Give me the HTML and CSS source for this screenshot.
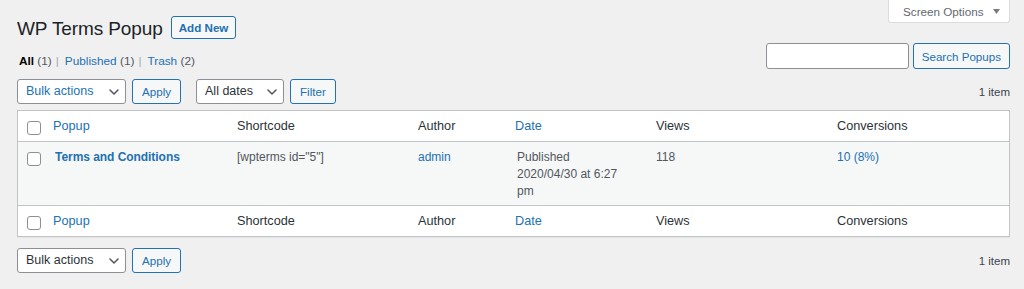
FILE: index.html
```html
<!DOCTYPE html>
<html lang="en">
<head>
<meta charset="utf-8">
<title>WP Terms Popup</title>
<link rel="stylesheet" href="styles.css">
</head>
<body>
<div class="wrap">
  <div class="screen-meta-links">
    <button class="screen-options" type="button">Screen Options
      <svg class="so-arrow" width="7" height="5" viewBox="0 0 7 5"><path d="M0 0h7L3.5 5z" fill="#787c82"/></svg>
    </button>
  </div>

  <div class="heading">
    <h1 class="page-title">WP Terms Popup</h1>
    <a class="add-new" href="#">Add New</a>
  </div>

  <div class="filters-row">
    <ul class="subsubsub">
      <li><a class="current" href="#">All <span class="count">(1)</span></a><span class="sep">|</span></li>
      <li><a href="#">Published <span class="count">(1)</span></a><span class="sep">|</span></li>
      <li><a href="#">Trash <span class="count">(2)</span></a></li>
    </ul>
    <div class="search-box">
      <input class="search-input" type="search" aria-label="Search Popups">
      <button class="btn btn-search" type="button">Search Popups</button>
    </div>
  </div>

  <div class="tablenav tablenav-top">
    <div class="actions">
      <span class="select-wrap">
        <select class="select select-bulk is-hover"><option>Bulk actions</option></select>
        <svg class="chev" width="10" height="6" viewBox="0 0 10 6"><path d="M1 1l4 4 4-4" fill="none" stroke="#50575e" stroke-width="1.5" stroke-linecap="round" stroke-linejoin="round"/></svg>
      </span>
      <button class="btn" type="button">Apply</button>
    </div>
    <div class="actions actions-dates">
      <span class="select-wrap">
        <select class="select select-dates"><option>All dates</option></select>
        <svg class="chev" width="10" height="6" viewBox="0 0 10 6"><path d="M1 1l4 4 4-4" fill="none" stroke="#50575e" stroke-width="1.5" stroke-linecap="round" stroke-linejoin="round"/></svg>
      </span>
      <button class="btn btn-filter" type="button">Filter</button>
    </div>
    <div class="displaying-num">1 item</div>
  </div>

  <table class="list-table">
    <colgroup>
      <col class="c-cb"><col class="c-popup"><col class="c-short"><col class="c-author"><col class="c-date"><col class="c-views"><col class="c-conv">
    </colgroup>
    <thead>
      <tr>
        <th class="cb"><input class="check" type="checkbox" aria-label="Select all"></th>
        <th class="sortable"><a href="#">Popup</a></th>
        <th>Shortcode</th>
        <th>Author</th>
        <th class="sortable"><a href="#">Date</a></th>
        <th>Views</th>
        <th>Conversions</th>
      </tr>
    </thead>
    <tbody>
      <tr class="alt">
        <td class="cb"><input class="check" type="checkbox" aria-label="Select Terms and Conditions"></td>
        <td><a class="row-title" href="#">Terms and Conditions</a></td>
        <td>[wpterms id="5"]</td>
        <td><a href="#">admin</a></td>
        <td class="date">Published<br>2020/04/30 at 6:27 pm</td>
        <td>118</td>
        <td><a href="#">10 (8%)</a></td>
      </tr>
    </tbody>
    <tfoot>
      <tr>
        <th class="cb"><input class="check" type="checkbox" aria-label="Select all"></th>
        <th class="sortable"><a href="#">Popup</a></th>
        <th>Shortcode</th>
        <th>Author</th>
        <th class="sortable"><a href="#">Date</a></th>
        <th>Views</th>
        <th>Conversions</th>
      </tr>
    </tfoot>
  </table>

  <div class="tablenav tablenav-bottom">
    <div class="actions">
      <span class="select-wrap">
        <select class="select select-bulk"><option>Bulk actions</option></select>
        <svg class="chev" width="10" height="6" viewBox="0 0 10 6"><path d="M1 1l4 4 4-4" fill="none" stroke="#50575e" stroke-width="1.5" stroke-linecap="round" stroke-linejoin="round"/></svg>
      </span>
      <button class="btn" type="button">Apply</button>
    </div>
    <div class="displaying-num">1 item</div>
  </div>
</div>
</body>
</html>
```

FILE: styles.css
```css
* { box-sizing: border-box; }

html, body {
  margin: 0;
  background: #f0f0f1;
  font-family: "Liberation Sans", Arial, sans-serif;
  color: #3c434a;
}

a { color: #2271b1; text-decoration: none; }

.wrap {
  padding: 0 14px 0 17px;
}

/* Screen options tab */
.screen-meta-links {
  float: right;
}
.screen-options {
  display: flex;
  align-items: center;
  gap: 9px;
  width: 122px;
  height: 23px;
  padding: 0 0 0 14px;
  background: #fff;
  border: 1px solid #dcdcde;
  border-top: none;
  border-radius: 0 0 3px 3px;
  font-family: inherit;
  font-size: 11.7px;
  color: #646970;
  cursor: pointer;
}
.so-arrow { display: block; }

/* Heading */
.heading {
  display: flex;
  align-items: flex-start;
  padding-top: 17px;
}
.page-title {
  margin: 0;
  font-size: 19px;
  line-height: 23px;
  font-weight: 400;
  letter-spacing: -0.1px;
  color: #1d2327;
}
.add-new {
  margin: -1px 0 0 8px;
  height: 23px;
  padding: 0 7px;
  line-height: 21px;
  border: 1px solid #2271b1;
  border-radius: 3px;
  background: #f6f7f7;
  font-size: 11.6px;
  font-weight: 700;
  color: #2271b1;
}

/* Views + search */
.filters-row {
  display: flex;
  justify-content: space-between;
  align-items: flex-start;
  margin-top: 3px;
}
.subsubsub {
  display: flex;
  list-style: none;
  margin: 10px 0 0 2px;
  padding: 0;
  font-size: 11.8px;
  line-height: 17px;
  color: #646970;
}
.subsubsub .current { color: #000; font-weight: 700; }
.subsubsub .count { color: #50575e; font-weight: 400; }
.subsubsub .sep { color: #a7aaad; margin: 0 6px 0 4px; }

.search-box {
  display: flex;
  gap: 4px;
}
.search-input {
  width: 143px;
  height: 26px;
  margin: 0;
  border: 1px solid #8c8f94;
  border-radius: 3px;
  background: #fff;
  font-family: inherit;
}

/* Buttons */
.btn {
  height: 25px;
  margin: 0;
  padding: 0 9px;
  border: 1px solid #2271b1;
  border-radius: 3px;
  background: #f6f7f7;
  color: #2271b1;
  font-family: inherit;
  font-size: 11.6px;
  line-height: 23px;
  cursor: pointer;
}
.btn-search { height: 26px; padding: 0 8px; }
.btn-filter { padding: 0 9px; }

/* Tablenav */
.tablenav {
  display: flex;
  align-items: center;
  height: 25px;
}
.tablenav-top { margin-top: 9px; }
.tablenav-bottom { margin-top: 11px; }
.actions {
  display: flex;
  align-items: center;
  gap: 6px;
}
.actions-dates { margin-left: 15px; }
.displaying-num {
  margin-left: auto;
  font-size: 11.5px;
  color: #3c434a;
}

.select-wrap {
  position: relative;
  display: block;
}
.select {
  display: block;
  appearance: none;
  -webkit-appearance: none;
  height: 25px;
  margin: 0;
  padding: 0 24px 0 8px;
  border: 1px solid #8c8f94;
  border-radius: 3px;
  background: #fff;
  color: #2c3338;
  font-family: inherit;
  font-size: 12.5px;
  line-height: 23px;
}
.select.is-hover { color: #2271b1; }
.select-bulk { width: 109px; }
.select-dates { width: 88px; }
.chev {
  position: absolute;
  right: 7px;
  top: 10px;
  pointer-events: none;
}

/* Table */
.list-table {
  width: 100%;
  margin-top: 6px;
  table-layout: fixed;
  border-collapse: separate;
  border-spacing: 0;
  border: 1px solid #c3c4c7;
  background: #fff;
  box-shadow: 0 1px 1px rgba(0,0,0,.04);
}
.c-cb { width: 27px; }
.c-popup { width: 182px; }
.c-short { width: 181px; }
.c-author { width: 99px; }
.c-date { width: 139px; }
.c-views { width: 181px; }
.c-conv { width: 182px; }

.list-table th,
.list-table td {
  text-align: left;
  vertical-align: top;
  padding: 7px 10px 6px;
  line-height: 17px;
}
.list-table th {
  font-weight: 400;
  font-size: 12.7px;
  color: #2c3338;
}
.list-table thead th { border-bottom: 1px solid #c3c4c7; }
.list-table tfoot th { border-top: 1px solid #c3c4c7; }
.list-table th.sortable { padding-left: 8px; }

.list-table td {
  font-size: 12px;
  color: #50575e;
  padding-top: 7px;
  padding-bottom: 5px;
}
.list-table tr.alt td { background: #f6f7f7; }
.list-table td.date { padding-right: 18px; }

.list-table .cb { padding: 0 0 0 9px; }
.list-table thead .cb { padding-top: 10px; }
.list-table tbody .cb { padding-top: 10px; }
.list-table tfoot .cb { padding-top: 10px; }

.check {
  display: block;
  appearance: none;
  -webkit-appearance: none;
  width: 14px;
  height: 14px;
  margin: 0;
  border: 1px solid #8c8f94;
  border-radius: 3px;
  background: #fff;
}

.row-title {
  font-size: 12px;
  font-weight: 700;
  letter-spacing: -0.05px;
}
```
